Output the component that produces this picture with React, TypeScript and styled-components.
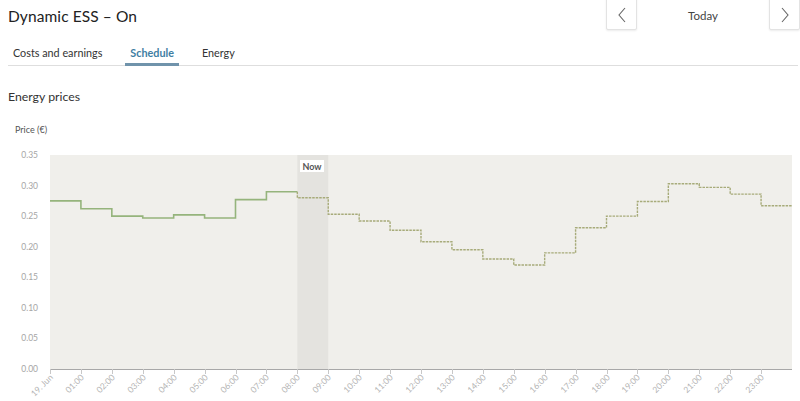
import styled, { createGlobalStyle } from "styled-components";

const GlobalStyle = createGlobalStyle`
  html, body {
    margin: 0;
    padding: 0;
    background: #ffffff;
    font-family: Lato, "Noto Sans", "Liberation Sans", sans-serif;
    color: #2b2b2b;
  }
`;

const PRICES = [
  0.275, 0.262, 0.25, 0.247, 0.252, 0.247, 0.277, 0.29, 0.28, 0.253, 0.242,
  0.227, 0.208, 0.195, 0.18, 0.17, 0.19, 0.231, 0.25, 0.274, 0.303, 0.297,
  0.286, 0.267,
];
const NOW_HOUR = 8;

// plot geometry inside the svg
const PLOT_LEFT = 50;
const PLOT_RIGHT = 792;
const PLOT_TOP = 15;
const PLOT_BOTTOM = 229;
const MAX_PRICE = 0.35;
const HOUR_W = (PLOT_RIGHT - PLOT_LEFT) / 24;

const xOf = (h: number) => PLOT_LEFT + h * HOUR_W;
const yOf = (p: number) => PLOT_BOTTOM - (p / MAX_PRICE) * (PLOT_BOTTOM - PLOT_TOP);

const Page = styled.div`
  width: 800px;
  height: 401px;
  overflow: hidden;
`;

const Header = styled.div`
  display: flex;
  align-items: center;
  justify-content: space-between;
  height: 31px;
  padding-left: 8px;
`;

const Title = styled.h1`
  margin: 0;
  font-size: 15.5px;
  font-weight: 400;
  color: #222;
  letter-spacing: 0.1px;
`;

const DateNav = styled.div`
  display: flex;
  align-items: flex-start;
  width: 194px;
  height: 31px;
  align-self: flex-start;
`;

const NavButton = styled.div`
  width: 31px;
  height: 38px;
  margin-top: -8px;
  box-sizing: border-box;
  border: 1px solid #e3e3e3;
  border-radius: 2px;
  box-shadow: 0 1px 2px rgba(0, 0, 0, 0.08);
  background: #fff;
  display: flex;
  align-items: center;
  justify-content: center;
  padding-top: 8px;
  color: #555;
`;

const DateLabel = styled.div`
  flex: 1;
  text-align: center;
  line-height: 31px;
  font-size: 11.5px;
  color: #444;
`;

const Tabs = styled.div`
  display: flex;
  gap: 18px;
  margin: 0 2px 0 8px;
  border-bottom: 1px solid #dedede;
  height: 34px;
`;

const Tab = styled.div<{ $active?: boolean }>`
  padding: 11px 5px 0;
  display: flex;
  align-items: center;
  font-size: ${(p) => (p.$active ? "10.8px" : "10.8px")};
  font-weight: ${(p) => (p.$active ? 700 : 400)};
  color: ${(p) => (p.$active ? "#3f7ea3" : "#333")};
  border-bottom: 3px solid ${(p) => (p.$active ? "#7093ab" : "transparent")};
  margin-bottom: -1px;
`;

const SectionTitle = styled.h2`
  margin: 23px 0 0 8px;
  font-size: 12.3px;
  line-height: 16px;
  font-weight: 400;
  color: #333;
`;

const AxisTitle = styled.div`
  margin: 19px 0 0 15px;
  font-size: 9px;
  line-height: 12px;
  color: #555;
`;

const ChartSvg = styled.svg`
  display: block;
  margin-top: 4px;
  font-family: Lato, "Noto Sans", "Liberation Sans", sans-serif;
`;

const Chevron = ({ dir }: { dir: "left" | "right" }) => (
  <svg width="10" height="16" viewBox="0 0 10 16">
    <path
      d={dir === "left" ? "M8 1 L2 8 L8 15" : "M2 1 L8 8 L2 15"}
      fill="none"
      stroke="#666"
      strokeWidth="1.1"
    />
  </svg>
);

const stepPath = (from: number, to: number) => {
  let d = `M${xOf(from)} ${yOf(from > 0 ? PRICES[from - 1] : PRICES[from])}`;
  for (let h = from; h < to; h++) {
    d += ` L${xOf(h)} ${yOf(PRICES[h])} L${xOf(h + 1)} ${yOf(PRICES[h])}`;
  }
  return d;
};

const PriceChart = () => {
  const ticks = [0, 0.05, 0.1, 0.15, 0.2, 0.25, 0.3, 0.35];
  const hours = Array.from({ length: 24 }, (_, i) => i);
  return (
    <ChartSvg width={800} height={261} viewBox="0 0 800 261">
      <rect
        x={PLOT_LEFT}
        y={PLOT_TOP}
        width={PLOT_RIGHT - PLOT_LEFT}
        height={PLOT_BOTTOM - PLOT_TOP}
        fill="#f0efeb"
      />
      <rect
        x={xOf(NOW_HOUR)}
        y={PLOT_TOP}
        width={HOUR_W}
        height={PLOT_BOTTOM - PLOT_TOP}
        fill="#e4e3df"
      />
      <rect x={300} y={20} width={24} height={12} fill="#fff" />
      <text x={312} y={29.5} fontSize="9" fontWeight="700" fill="#555" textAnchor="middle">
        Now
      </text>

      {ticks.map((t) => (
        <text
          key={t}
          x={38}
          y={yOf(t) + 3}
          fontSize="8.5"
          fill="#a5a5a5"
          textAnchor="end"
        >
          {t.toFixed(2)}
        </text>
      ))}

      <line x1={PLOT_LEFT} x2={PLOT_RIGHT} y1={PLOT_BOTTOM + 0.5} y2={PLOT_BOTTOM + 0.5} stroke="#a8a8a8" />
      {hours.map((h) => {
        const x = Math.round(xOf(h)) + 0.5;
        return (
          <g key={h}>
            <line x1={x} x2={x} y1={PLOT_BOTTOM} y2={PLOT_BOTTOM + 5} stroke="#c8c8c8" />
            <text
              x={x + 3}
              y={PLOT_BOTTOM + 9}
              fontSize="8.5"
              fill="#b3b3b3"
              textAnchor="end"
              transform={`rotate(-45 ${x + 3} ${PLOT_BOTTOM + 9})`}
            >
              {h === 0 ? "19. Jun" : `${String(h).padStart(2, "0")}:00`}
            </text>
          </g>
        );
      })}

      <path d={stepPath(0, NOW_HOUR)} fill="none" stroke="#95b47c" strokeWidth="1.6" />
      <path
        d={stepPath(NOW_HOUR, 24)}
        fill="none"
        stroke="#a7ab7a"
        strokeWidth="1.4"
        strokeDasharray="2.5 1"
      />
    </ChartSvg>
  );
};

export default function App() {
  return (
    <Page>
      <GlobalStyle />
      <Header>
        <Title>Dynamic ESS – On</Title>
        <DateNav>
          <NavButton>
            <Chevron dir="left" />
          </NavButton>
          <DateLabel>Today</DateLabel>
          <NavButton>
            <Chevron dir="right" />
          </NavButton>
        </DateNav>
      </Header>
      <Tabs>
        <Tab>Costs and earnings</Tab>
        <Tab $active>Schedule</Tab>
        <Tab>Energy</Tab>
      </Tabs>
      <SectionTitle>Energy prices</SectionTitle>
      <AxisTitle>Price (€)</AxisTitle>
      <PriceChart />
    </Page>
  );
}
